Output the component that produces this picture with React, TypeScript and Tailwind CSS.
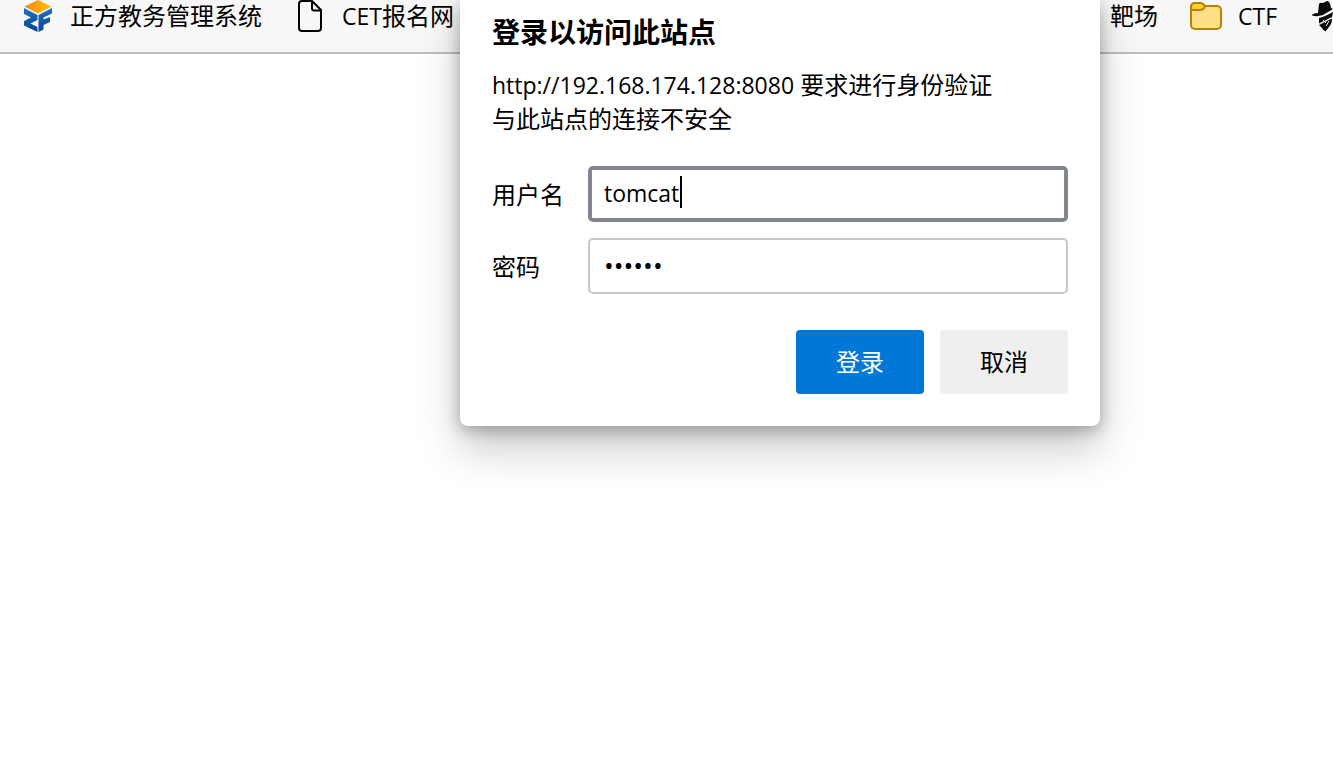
import { useState, type ReactNode } from "react";
import { clsx } from "clsx";

interface BookmarkProps {
  icon?: ReactNode;
  children?: ReactNode;
}

function Bookmark({ icon, children }: BookmarkProps) {
  return (
    <a href="#" className="flex h-8 shrink-0 items-center gap-4 whitespace-nowrap">
      {icon}
      {children && <span>{children}</span>}
    </a>
  );
}

function Latin({ children }: { children: ReactNode }) {
  return <span className="text-[23px]">{children}</span>;
}

function ZfIcon() {
  return (
    <svg viewBox="0 0 32 32" className="h-8 w-8 shrink-0" aria-hidden="true">
      <defs>
        <linearGradient id="zf-top" x1="0" y1="0" x2="1" y2="0">
          <stop offset="0" stopColor="#f08a00" />
          <stop offset="1" stopColor="#ffc21a" />
        </linearGradient>
        <linearGradient id="zf-side" x1="0" y1="0" x2="0" y2="1">
          <stop offset="0" stopColor="#1c73c4" />
          <stop offset="1" stopColor="#0a4594" />
        </linearGradient>
      </defs>
      <path d="M16 0 29.500 6.500 16 13.500 2.500 6.500Z" fill="url(#zf-top)" />
      <path
        d="M2 8 15.500 15V20L8.500 23.500 15.500 27V32L2 25.500V21L9 17.500 2 14Z"
        fill="url(#zf-side)"
      />
      <path
        d="M16.500 15 30 8V13.500L21.500 17.500V19.500L28 17V22L21.500 25V29.500L16.500 32Z"
        fill="url(#zf-side)"
      />
    </svg>
  );
}

function PageIcon() {
  return (
    <svg
      viewBox="0 0 32 32"
      className="h-8 w-8 shrink-0"
      fill="none"
      stroke="#000"
      strokeWidth="2"
      strokeLinejoin="round"
      aria-hidden="true"
    >
      <path d="M8 1H18L27 10V28A3 3 0 0 1 24 31H8A3 3 0 0 1 5 28V4A3 3 0 0 1 8 1Z" />
      <path d="M18 1V8.500A2 2 0 0 0 20 10.500H27" />
    </svg>
  );
}

function FolderIcon() {
  return (
    <svg
      viewBox="0 0 32 32"
      className="h-8 w-8 shrink-0"
      stroke="#b78300"
      strokeWidth="2"
      strokeLinejoin="round"
      aria-hidden="true"
    >
      <path
        d="M5 3H11L15 6H27A4 4 0 0 1 31 10V25A4 4 0 0 1 27 29H5A4 4 0 0 1 1 25V7A4 4 0 0 1 5 3Z"
        fill="#ffdf85"
      />
      <path
        d="M5 3H11Q14 4 15 6.500Q13.500 10 9.500 10H3Q1 10 1 7A4 4 0 0 1 5 3Z"
        fill="#ffcf3d"
      />
    </svg>
  );
}

function HackerIcon() {
  return (
    <svg viewBox="0 0 32 32" className="h-8 w-8 shrink-0" fill="#0b0b0b" aria-hidden="true">
      <path d="M10 4Q11 2 14 3L18 1Q21 1 22 8L24 9Q19 12 14 15Q8 17 3 15.500Q3 13.500 9 13Z" />
      <path d="M10 18Q15 17 24 12L23 17Q17 20 10 23.500Z" />
      <path d="M10 25Q16 22 23 18.500Q23 24 20 27L16.500 31.500Q14 30 13 28Z" />
      <path d="M14 20 17 23M20 21 17 26" fill="none" stroke="#f7f7f7" strokeWidth="1" />
    </svg>
  );
}

interface FieldProps {
  id: string;
  label: string;
  type: "text" | "password";
  value: string;
  onChange: (value: string) => void;
  active?: boolean;
}

function Field({ id, label, type, value, onChange, active }: FieldProps) {
  return (
    <div className="flex items-center">
      <label htmlFor={id} className="w-24 shrink-0 pt-0.5">
        {label}
      </label>
      <div className="relative flex-1">
        <input
          id={id}
          type={type}
          value={value}
          autoComplete="off"
          onChange={(e) => onChange(e.target.value)}
          className={clsx(
            "block h-14 w-full rounded-[5px] bg-white pb-0.5 outline-none",
            type === "password" ? "text-[26px]" : "text-[23px]",
            active
              ? "border-4 border-[#82868e] px-3 caret-transparent"
              : "border-2 border-[#c8c8c8] px-3.5",
          )}
        />
        {active && (
          <span
            aria-hidden="true"
            className="pointer-events-none absolute top-2.5 left-[92px] h-8 w-0.5 bg-black"
          />
        )}
      </div>
    </div>
  );
}

export default function App() {
  const [username, setUsername] = useState("tomcat");
  const [password, setPassword] = useState("tomcat");

  return (
    <div className="relative min-h-screen overflow-hidden bg-white font-['Open_Sans','Noto_Sans_CJK_SC',sans-serif] text-2xl leading-8 text-black">
      <nav className="flex h-[54px] items-start border-b-2 border-[#bdbdbd] bg-[#f7f7f7]">
        <div className="flex gap-8 pl-[22px]">
          <Bookmark icon={<ZfIcon />}>正方教务管理系统</Bookmark>
          <Bookmark icon={<PageIcon />}>
            <Latin>CET</Latin>报名网
          </Bookmark>
        </div>
        <div className="ml-auto flex w-[223px] gap-8 overflow-hidden">
          <Bookmark>靶场</Bookmark>
          <Bookmark icon={<FolderIcon />}>
            <Latin>CTF</Latin>
          </Bookmark>
          <Bookmark icon={<HackerIcon />} />
        </div>
      </nav>

      <div
        role="dialog"
        aria-labelledby="auth-title"
        className="absolute top-0 left-[460px] w-[640px] rounded-b-lg bg-white px-8 pt-3.5 pb-8 shadow-[0_22px_44px_rgba(0,0,0,0.22),0_4px_16px_rgba(0,0,0,0.28)]"
      >
        <h1 id="auth-title" className="text-[28px] leading-9 font-bold">
          登录以访问此站点
        </h1>
        <p className="mt-[18px] leading-[34px]">
          <Latin>http://192.168.174.128:8080</Latin> 要求进行身份验证
          <br />
          与此站点的连接不安全
        </p>

        <form onSubmit={(e) => e.preventDefault()} className="mt-[30px]">
          <div className="flex flex-col gap-4">
            <Field
              id="username"
              label="用户名"
              type="text"
              value={username}
              onChange={setUsername}
              active
            />
            <Field
              id="password"
              label="密码"
              type="password"
              value={password}
              onChange={setPassword}
            />
          </div>
          <div className="mt-9 flex justify-end gap-4">
            <button type="submit" className="h-16 w-32 rounded bg-[#0078d7] text-white">
              登录
            </button>
            <button type="button" className="h-16 w-32 rounded bg-[#efefef]">
              取消
            </button>
          </div>
        </form>
      </div>
    </div>
  );
}
